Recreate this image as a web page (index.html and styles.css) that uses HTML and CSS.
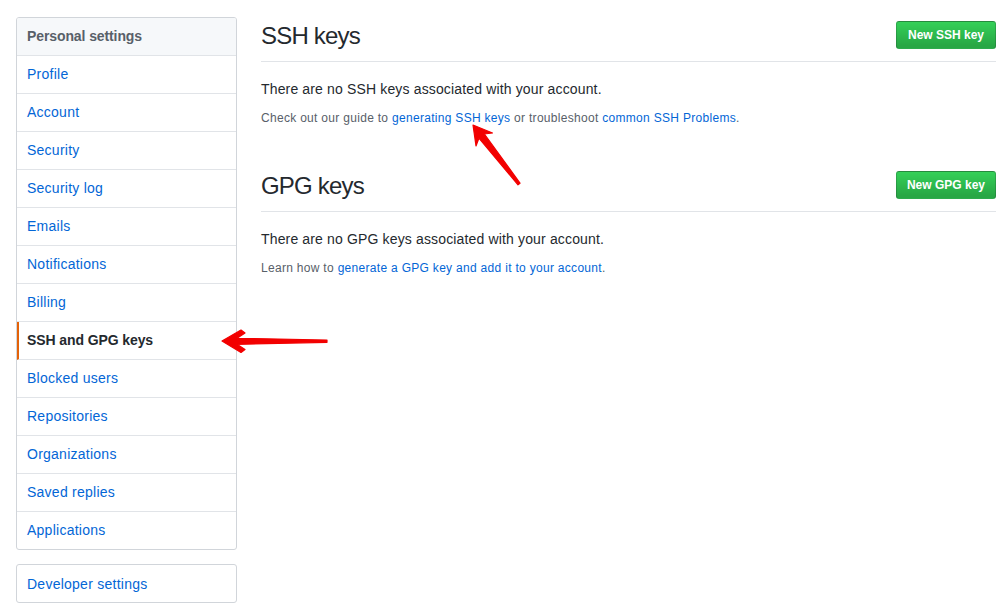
FILE: index.html
```html
<!DOCTYPE html>
<html>
<head>
<meta charset="utf-8">
<link rel="stylesheet" href="styles.css">
</head>
<body>
<div class="page">
  <nav class="sidebar">
    <div class="menu">
      <div class="menu-heading">Personal settings</div>
      <a class="menu-item">Profile</a>
      <a class="menu-item">Account</a>
      <a class="menu-item">Security</a>
      <a class="menu-item">Security log</a>
      <a class="menu-item">Emails</a>
      <a class="menu-item">Notifications</a>
      <a class="menu-item">Billing</a>
      <a class="menu-item selected">SSH and GPG keys</a>
      <a class="menu-item">Blocked users</a>
      <a class="menu-item">Repositories</a>
      <a class="menu-item">Organizations</a>
      <a class="menu-item">Saved replies</a>
      <a class="menu-item last">Applications</a>
    </div>
    <div class="menu dev">
      <a class="menu-item last">Developer settings</a>
    </div>
  </nav>
  <main class="main">
    <section class="section">
      <div class="subhead">
        <h2 class="subhead-title">SSH keys</h2>
        <button class="btn">New SSH key</button>
      </div>
      <p class="lead">There are no SSH keys associated with your account.</p>
      <p class="note">Check out our guide to <a class="link">generating SSH keys</a> or troubleshoot <a class="link">common SSH Problems</a>.</p>
    </section>
    <section class="section spacious">
      <div class="subhead">
        <h2 class="subhead-title">GPG keys</h2>
        <button class="btn">New GPG key</button>
      </div>
      <p class="lead">There are no GPG keys associated with your account.</p>
      <p class="note">Learn how to <a class="link">generate a GPG key and add it to your account</a>.</p>
    </section>
  </main>
</div>
<svg class="arrows" width="1007" height="612" viewBox="0 0 1007 612">
  <polygon points="473,125 492.5,133 484.4,134 520,183.2 518,184.8 478.9,138.2 476,146" fill="#f20000" stroke="#f20000" stroke-width="1.2" stroke-linejoin="round"/>
  <polygon points="222,341 241,330 245,333 237,338.3 327,340 327,342.3 237,344.3 245,349.5 241,352.5" fill="#f20000" stroke="#f20000" stroke-width="1.2" stroke-linejoin="round"/>
</svg>
</body>
</html>
```

FILE: styles.css
```css
* { box-sizing: border-box; }
html, body { margin: 0; padding: 0; background: #fff; }
body {
  font-family: "Liberation Sans", Arial, sans-serif;
  font-size: 14px;
  line-height: 1.5;
  color: #24292e;
  position: relative;
  width: 1007px;
  height: 612px;
  overflow: hidden;
}
.page {
  display: flex;
  gap: 24px;
  padding: 17px 11px 0 16px;
}
.sidebar {
  width: 221px;
  flex: none;
}
.menu {
  border: 1px solid #d1d5da;
  border-radius: 3px;
  display: flex;
  flex-direction: column;
  overflow: hidden;
}
.menu.dev { margin-top: 14px; }
.menu-heading {
  padding: 8px 10px;
  font-weight: bold;
  color: #586069;
  background: #f6f8fa;
  border-bottom: 1px solid #e1e4e8;
  line-height: 21px;
  letter-spacing: -0.1px;
}
.menu-item {
  display: block;
  padding: 8px 10px;
  line-height: 21px;
  color: #0366d6;
  border-bottom: 1px solid #e1e4e8;
  text-decoration: none;
  letter-spacing: 0.25px;
}
.menu.dev .menu-item { padding-top: 9px; padding-bottom: 7px; }
.menu-item.last { border-bottom: 0; }
.menu-item.selected {
  color: #24292e;
  font-weight: bold;
  border-left: 2px solid #e36209;
  padding-left: 8px;
  letter-spacing: -0.1px;
}
.main {
  flex: 1;
  min-width: 0;
}
.section.spacious { margin-top: 40px; }
.subhead {
  display: flex;
  align-items: center;
  justify-content: space-between;
  padding-bottom: 8px;
  border-bottom: 1px solid #e1e4e8;
  margin-bottom: 17px;
}
.subhead-title {
  margin: 0;
  font-size: 24px;
  font-weight: normal;
  line-height: 36px;
  color: #24292e;
  letter-spacing: -0.8px;
  position: relative;
  top: 1px;
}
.btn {
  font-family: "Liberation Sans", Arial, sans-serif;
  font-size: 12px;
  font-weight: bold;
  line-height: 20px;
  height: 28px;
  padding: 3px 10px;
  color: #fff;
  background: linear-gradient(180deg, #34d058 0%, #28a745 90%);
  border: 1px solid rgba(27, 31, 35, 0.2);
  border-radius: 3px;
  min-width: 100px;
}
.lead {
  margin: 0 0 9px 0;
  font-size: 14px;
  line-height: 21px;
  letter-spacing: 0.15px;
}
.note {
  margin: 0;
  font-size: 12px;
  line-height: 18px;
  color: #586069;
  letter-spacing: 0.3px;
}
.link { color: #0366d6; text-decoration: none; }
.arrows {
  position: absolute;
  left: 0;
  top: 0;
  pointer-events: none;
}
```
